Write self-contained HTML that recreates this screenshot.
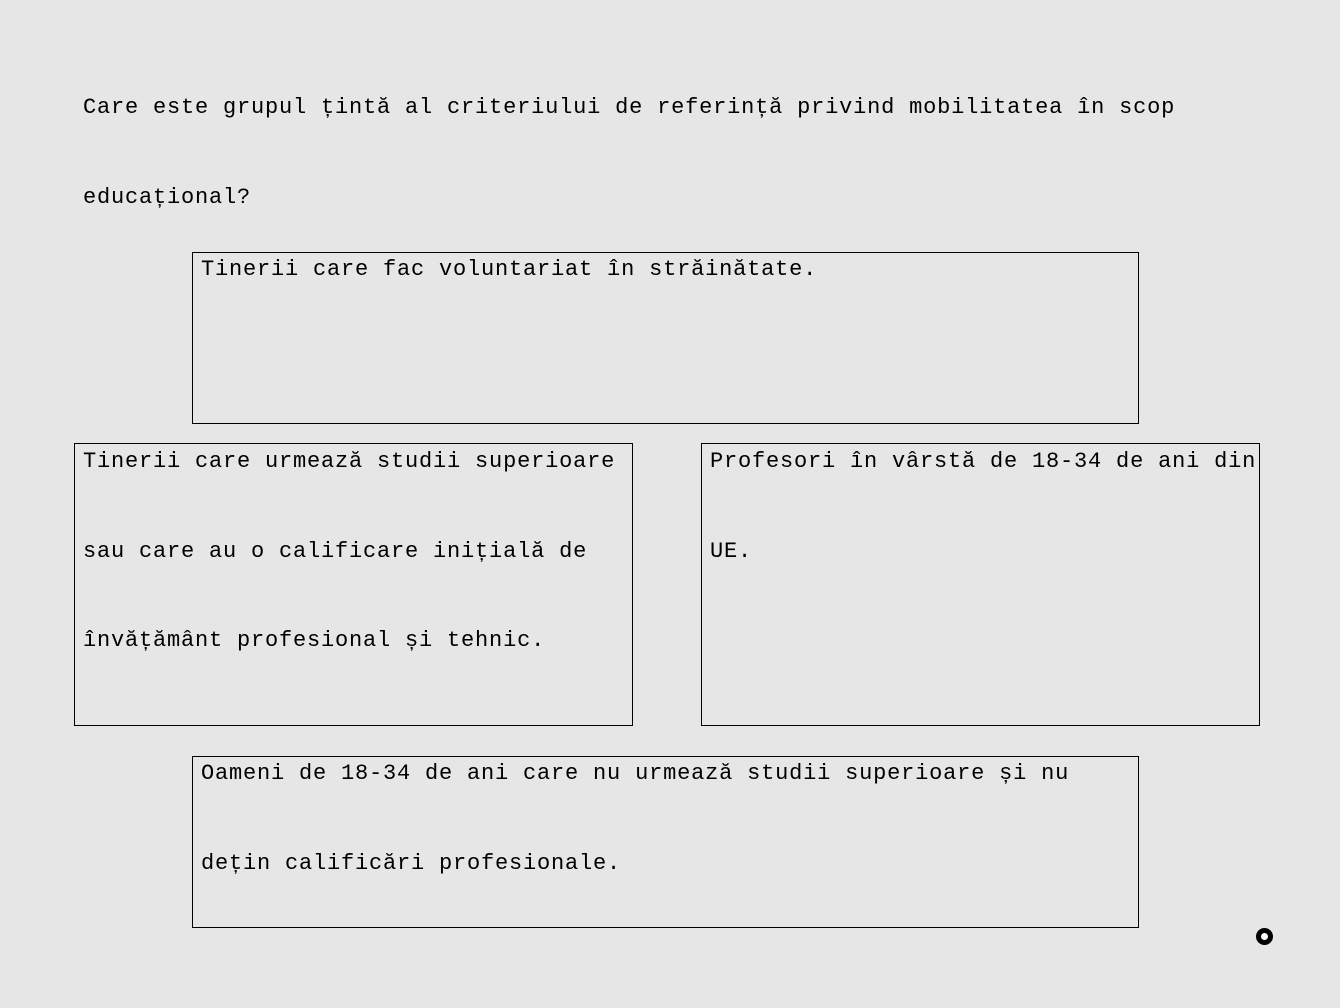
<!DOCTYPE html>
<html><head><meta charset="utf-8"><style>
html,body{margin:0;padding:0;}
body{width:1340px;height:1008px;background:#e6e6e6;position:relative;overflow:hidden;
font-family:"Liberation Mono",monospace;font-size:22px;letter-spacing:0.8px;color:#000;}
.t{position:absolute;line-height:89.6px;white-space:pre;}
.b{position:absolute;border:1px solid #000;box-sizing:border-box;}
.ring{position:absolute;left:1256px;top:928px;width:17px;height:17px;border-radius:50%;border:5px solid #000;box-sizing:border-box;background:#fff;}
</style></head><body>
<div class="t" style="left:83px;top:63px;">Care este grupul țintă al criteriului de referință privind mobilitatea în scop
educațional?</div>

<div class="b" style="left:192px;top:252px;width:947px;height:172px;"></div>
<div class="t" style="left:201px;top:225px;">Tinerii care fac voluntariat în străinătate.</div>

<div class="b" style="left:74px;top:443px;width:559px;height:283px;"></div>
<div class="t" style="left:83px;top:417px;">Tinerii care urmează studii superioare
sau care au o calificare inițială de
învățământ profesional și tehnic.</div>

<div class="b" style="left:701px;top:443px;width:559px;height:283px;"></div>
<div class="t" style="left:710px;top:417px;">Profesori în vârstă de 18-34 de ani din
UE.</div>

<div class="b" style="left:192px;top:756px;width:947px;height:172px;"></div>
<div class="t" style="left:201px;top:729px;">Oameni de 18-34 de ani care nu urmează studii superioare și nu
dețin calificări profesionale.</div>

<div class="ring"></div>
</body></html>
